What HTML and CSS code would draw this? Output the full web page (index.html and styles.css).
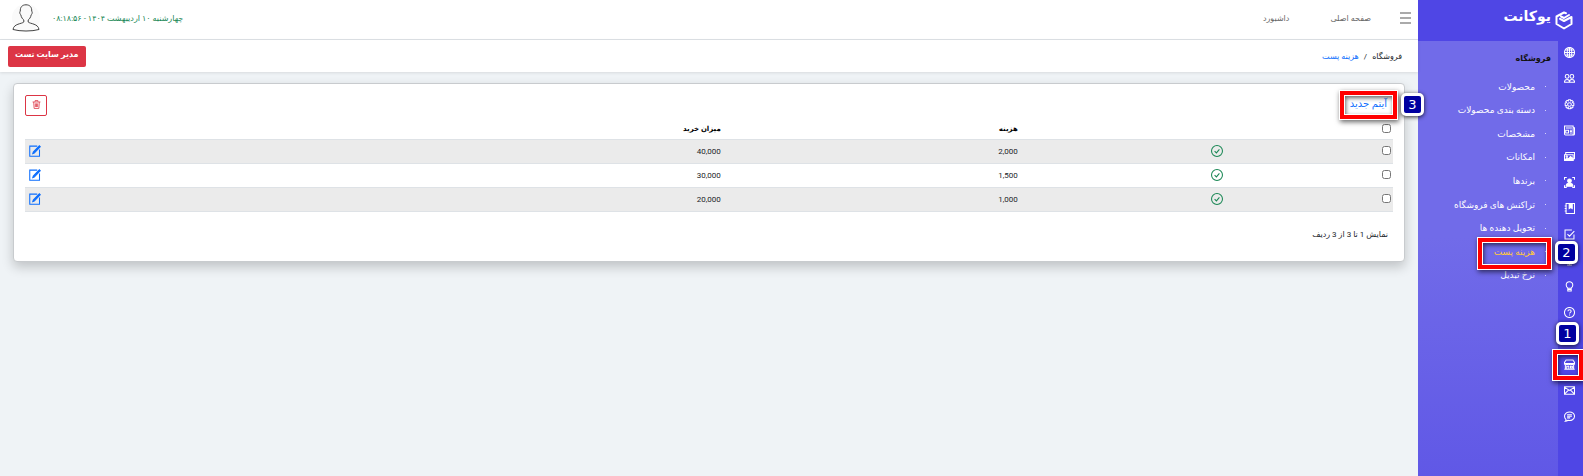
FILE: index.html
```html
<!DOCTYPE html>
<html lang="fa" dir="rtl">
<head>
  <meta charset="UTF-8" />
  <meta name="viewport" content="width=device-width, initial-scale=1.0"/>
  <title>هزینه پست</title>
  <link rel="stylesheet" href="styles.css">
</head>
<body>

<aside class="sidebar">
  <div class="brand">
    <svg class="brand-icon" viewBox="0 0 18 19" fill="none" stroke="#fff" stroke-width="2" stroke-linejoin="round" stroke-linecap="round">
      <path d="M11 2.200 9 1.500 1.500 5.500v7.500L9 17.500l7.500-4.500V6L9 10 5 7.800M6 5.500l3 1.500 5-3"/>
    </svg>
    <span class="brand-name">یوکانت</span>
  </div>
  <div class="sidebar-body">
    <nav class="rail">
      <a href="#" aria-label="سایت"><svg viewBox="0 0 16 16"><circle cx="8" cy="8" r="7.300"/><ellipse cx="8" cy="8" rx="3.300" ry="7.300"/><path d="M8 .7v14.600M.7 8h14.600M1.800 4.500h12.400M1.800 11.500h12.400"/></svg></a>
      <a href="#" aria-label="کاربران"><svg viewBox="0 0 16 16"><circle cx="4.500" cy="5" r="2.700"/><circle cx="11.500" cy="5" r="2.700"/><path d="M.6 13.500c0-2.500 1.500-4 3.900-4s3.500 1.500 3.500 4zM8 13.500c0-2.500 1.200-4 3.500-4s3.900 1.500 3.900 4z"/></svg></a>
      <a href="#" aria-label="تنظیمات"><svg viewBox="0 0 16 16"><circle cx="8" cy="8" r="2.700"/><path d="M6.700 1h2.600l.5 1.900 1.700-1 1.900 1.900-1 1.700 1.900.5v3.200l-1.900.5 1 1.700-1.900 1.900-1.700-1-.5 1.900H6.700l-.5-1.900-1.700 1-1.900-1.900 1-1.700-1.900-.5V6l1.900-.5-1-1.700 1.900-1.900 1.700 1z"/></svg></a>
      <a href="#" aria-label="اخبار"><svg viewBox="0 0 16 16"><path d="M.7 1.500h12.600v13H2.200A1.500 1.500 0 0 1 .7 13zM13.300 4h2v9a1.500 1.500 0 0 1-2 1.500M2.500 4.500h9M2.500 7.500h4v4h-4zM8.500 7.500h3M8.500 9.500h3M8.500 11.500h3"/></svg></a>
      <a href="#" aria-label="تصاویر"><svg viewBox="0 0 16 16"><path d="M.7 5.300h12.600v8.500H.7zM2.500 5V2.300h12.800v9h-2"/><circle cx="4" cy="8" r="1"/><path class="solid" d="m1 13 3.500-3 2 1.500L9.500 8l3.500 3v2.500H1z"/></svg></a>
      <a href="#" aria-label="اعضا"><svg viewBox="0 0 16 16"><path d="M.7 4V.7H4M12 .7h3.300V4M15.300 12v3.300H12M4 15.300H.7V12"/><circle class="solid" cx="8" cy="5.500" r="2.700"/><path class="solid" d="M3 13.500c0-3 1.800-4.300 5-4.300s5 1.300 5 4.300z"/></svg></a>
      <a href="#" aria-label="دفترچه"><svg viewBox="0 0 16 16"><path d="M3 .7h12.300v14.600H3zM1 4.500h3M1 8h3M1 11.500h3"/><path class="solid" d="M7.500 1h4.500v7l-2.200-1.500L7.500 8z"/></svg></a>
      <a href="#" aria-label="وظایف"><svg viewBox="0 0 16 16"><path d="M11.500 1.500H1.500v13h13V8M5 7.500l3 3 7-7.500"/></svg></a>
      <a href="#" aria-label="نمایش"><svg viewBox="0 0 16 16"><path d="M1 2h14v9H1zM8 11v3M4.500 14.500h7"/></svg></a>
      <a href="#" aria-label="ایده‌ها"><svg viewBox="0 0 16 16"><path d="M5.500 10.500c-1.200-1.200-2.300-2.500-2.300-4.700a4.800 4.800 0 0 1 9.600 0c0 2.200-1.100 3.500-2.300 4.700zM5.500 10.500v4h5v-4M5.500 12.500h5"/></svg></a>
      <a href="#" aria-label="راهنما"><svg viewBox="0 0 16 16"><circle cx="8" cy="8" r="7.300"/><path d="M5.700 6.200c0-3.200 4.700-3 4.700-.2 0 1.700-2.300 1.700-2.300 3.600M8.100 11v1.500"/></svg></a>
      <a href="#" aria-label="گزارش"><svg viewBox="0 0 16 16"><path d="M2 13V8M6 13V4M10 13V9M14 13V3"/></svg></a>
      <a href="#" class="marked mark-shop" aria-label="فروشگاه"><svg viewBox="0 0 16 16"><path d="M3 1.500h10l2.300 3.700v1.300H.7V5.200zM.7 6.500c0 2.500 3.700 2.500 3.700 0 0 2.500 3.600 2.500 3.600 0 0 2.500 3.600 2.500 3.600 0 0 2.500 3.700 2.500 3.700 0M2 8.500v6.500M14 8.500v6.500M.5 15h15M4 15v-4.500h3V15M9.500 10.500h2.700v2.500H9.500z"/></svg><span class="frame"></span><b class="step">1</b></a>
      <a href="#" aria-label="پیام‌ها"><svg viewBox="0 0 16 16"><path d="M.7 2.700h14.600v10.600H.7zM1 3.500l7 4.500 7-4.500M1 13l5.500-5.500M15 13 9.500 7.500"/></svg></a>
      <a href="#" aria-label="نظرات"><svg viewBox="0 0 16 16"><path d="M2 14.800c.8-.7 1-1.500 1-2.300C-1.500 8 1.500 1.300 8 1.300c4 0 7.300 2.800 7.300 6.200 0 4.700-4.800 7.200-9.300 6-1 .7-2.500 1.300-4 1.300zM4.500 5.500h7M4.500 7.700h7M4.500 10h4.500"/></svg></a>
    </nav>
    <nav class="menu">
      <h2>فروشگاه</h2>
      <ul>
        <li><a href="#">محصولات</a></li>
        <li><a href="#">دسته بندی محصولات</a></li>
        <li><a href="#">مشخصات</a></li>
        <li><a href="#">امکانات</a></li>
        <li><a href="#">برندها</a></li>
        <li><a href="#">تراکنش های فروشگاه</a></li>
        <li><a href="#">تحویل دهنده ها</a></li>
        <li class="marked mark-menu"><a href="#" class="active">هزینه پست</a><span class="frame"></span><b class="step">2</b></li>
        <li><a href="#">نرخ تبدیل</a></li>
      </ul>
    </nav>
  </div>
</aside>

<div class="page">
  <header class="topbar">
    <button class="toggle" aria-label="منو"><span></span><span></span><span></span></button>
    <nav class="top-links">
      <a href="#">صفحه اصلی</a>
      <a href="#">داشبورد</a>
    </nav>
    <time class="clock">چهارشنبه ۱۰ اردیبهشت ۱۴۰۴ - ۰۸:۱۸:۵۶</time>
    <svg class="avatar" viewBox="0 0 28 28" fill="none" stroke="#444" stroke-width="1">
      <circle cx="14" cy="14" r="14" fill="#fafafa" stroke="none"/>
      <path d="M14 .8c-4 0-6 2.600-5.700 6.500-.8 0-.7 2.700.5 3.500.5 2.700 2 4.500 3 5.200v2c-2 2-10 1.500-10.800 7.500 7 2 19 2 26 0-.8-6-8.800-5.500-10.800-7.500v-2c1-.7 2.500-2.500 3-5.200 1.200-.8 1.300-3.500.5-3.500C20 3.400 18 .8 14 .8z"/>
    </svg>
  </header>

  <div class="subbar">
    <nav class="breadcrumb">
      <span>فروشگاه</span>
      <span>/</span>
      <a href="#">هزینه پست</a>
    </nav>
    <button class="admin">مدیر سایت تست</button>
  </div>

  <main class="card">
    <div class="actions">
      <div class="marked mark-new"><a href="#">آیتم جدید</a><span class="frame"></span><b class="step">3</b></div>
      <button class="delete" aria-label="حذف">
        <svg viewBox="0 0 16 16" fill="none" stroke="currentColor" stroke-width="1.400"><path d="M1 3.500h14M5.500 3V1h5v2M3 3.500l.8 11.500h8.400L13 3.500M6 6v6.500M8 6v6.500M10 6v6.500"/></svg>
      </button>
    </div>

    <table class="list">
      <thead>
        <tr>
          <th class="col-check"><input type="checkbox" aria-label="انتخاب همه"></th>
          <th class="col-status"></th>
          <th class="col-cost">هزینه</th>
          <th>میزان خرید</th>
          <th class="col-edit"></th>
        </tr>
      </thead>
      <tbody>
        <tr>
          <td><input type="checkbox" aria-label="انتخاب ردیف 1"></td>
          <td><svg class="ok" viewBox="0 0 16 16"><circle cx="8" cy="8" r="7.300"/><path d="m4.800 8.200 2.400 2.400 4-4.800"/></svg></td>
          <td>2,000</td>
          <td>40,000</td>
          <td><a href="#" aria-label="ویرایش"><svg class="edit" viewBox="0 0 16 16"><path d="M11 1.500H1v13.500h13V6"/><path class="pen" d="M5 11.500l.7-2L13.800 1l1.200 1.200L7 10.800z"/></svg></a></td>
        </tr>
        <tr>
          <td><input type="checkbox" aria-label="انتخاب ردیف 2"></td>
          <td><svg class="ok" viewBox="0 0 16 16"><circle cx="8" cy="8" r="7.300"/><path d="m4.800 8.200 2.400 2.400 4-4.800"/></svg></td>
          <td>1,500</td>
          <td>30,000</td>
          <td><a href="#" aria-label="ویرایش"><svg class="edit" viewBox="0 0 16 16"><path d="M11 1.500H1v13.500h13V6"/><path class="pen" d="M5 11.500l.7-2L13.800 1l1.200 1.200L7 10.800z"/></svg></a></td>
        </tr>
        <tr>
          <td><input type="checkbox" aria-label="انتخاب ردیف 3"></td>
          <td><svg class="ok" viewBox="0 0 16 16"><circle cx="8" cy="8" r="7.300"/><path d="m4.800 8.200 2.400 2.400 4-4.800"/></svg></td>
          <td>1,000</td>
          <td>20,000</td>
          <td><a href="#" aria-label="ویرایش"><svg class="edit" viewBox="0 0 16 16"><path d="M11 1.500H1v13.500h13V6"/><path class="pen" d="M5 11.500l.7-2L13.800 1l1.200 1.200L7 10.800z"/></svg></a></td>
        </tr>
      </tbody>
    </table>

    <p class="summary">نمایش 1 تا 3 از 3 ردیف</p>
  </main>
</div>

</body>
</html>
```
FILE: styles.css
```css
* {
  box-sizing: border-box;
}

body {
  margin: 0;
  min-height: 100vh;
  display: flex;
  background: #eff3f6;
  color: #212529;
  font-family: Roboto, "DejaVu Sans", sans-serif;
  font-size: 8px;
}

a {
  color: #0d6efd;
  text-decoration: none;
}

button {
  font-family: inherit;
  cursor: pointer;
}

svg {
  display: block;
}

/* Sidebar */
.sidebar {
  width: 165px;
  flex-shrink: 0;
  display: flex;
  flex-direction: column;
  background: #4f46e5;
}

.brand {
  height: 41px;
  padding: 11px 10px 0;
  display: flex;
  gap: 4px;
}

.brand-icon {
  width: 18px;
  height: 19px;
}

.brand-name {
  color: #fff;
  font-size: 14px;
  font-weight: bold;
  line-height: 10px;
}

.sidebar-body {
  flex: 1;
  display: flex;
}

.rail {
  width: 25px;
  margin-top: -2px;
  display: flex;
  flex-direction: column;
}

.rail a {
  height: 26px;
  padding-right: 8px;
  display: flex;
  align-items: center;
  color: #fff;
}

.rail svg {
  width: 11px;
  height: 11px;
  fill: none;
  stroke: currentColor;
  stroke-width: 1.5;
}

.rail .solid {
  fill: currentColor;
}

.menu {
  flex: 1;
  padding: 9px 7px;
  background: linear-gradient(#716be9 45%, #6058e6);
}

.menu h2 {
  margin: 0 0 7px;
  color: #111;
  font-size: 8px;
  line-height: 18px;
}

.menu ul {
  height: 212px;
  margin: 0;
  padding: 0;
  display: grid;
  grid-auto-rows: 1fr;
  list-style: none;
}

.menu li {
  padding-right: 5px;
  display: flex;
  align-items: center;
  gap: 10px;
}

.menu li::before {
  content: "";
  width: 1px;
  height: 1px;
  background: #d5d2fa;
}

.menu a {
  color: #fff;
  font-size: 9px;
}

.menu .active {
  color: #ffc83d;
}

/* Numbered step markers */
.marked {
  position: relative;
}

.frame,
.step {
  position: absolute;
  z-index: 2;
  pointer-events: none;
}

.frame {
  border: 4px solid #f00;
  outline: 1px solid #fff;
  box-shadow: 1px 2px 5px 1px rgba(0, 0, 0, 0.6), inset 0 0 0 1px #fff, inset 1px 2px 4px 1px rgba(0, 0, 0, 0.6);
}

.step {
  width: 23px;
  height: 23px;
  border: 3px solid #fff;
  border-radius: 5px;
  background: #0000a0;
  box-shadow: 0 1px 4px rgba(0, 0, 0, 0.8);
  color: #fff;
  font: 13px/17px "DejaVu Sans", sans-serif;
  text-align: center;
}

.mark-shop .frame {
  inset: -1px 0 -3px -5px;
}

.mark-shop .step {
  top: -29px;
  left: -2px;
}

.mark-menu .frame {
  inset: -2px 0 -6px 53px;
}

.mark-menu .step {
  top: 1px;
  right: -27px;
}

.mark-new .frame {
  inset: -4px -10px -4px -10px;
}

.mark-new .step {
  top: -2px;
  right: -37px;
}

/* Page */
.page {
  flex: 1;
  min-width: 0;
}

.topbar {
  height: 40px;
  padding: 0 7px 3px 12px;
  display: flex;
  align-items: center;
  border-bottom: 1px solid #dee2e6;
  background: #fff;
}

.toggle {
  padding: 0;
  display: grid;
  gap: 3px;
  border: 0;
  background: none;
}

.toggle span {
  width: 11px;
  height: 2px;
  background: #aaa;
}

.top-links {
  margin-right: 29px;
  display: flex;
  gap: 41px;
}

.top-links a {
  color: #666;
}

.clock {
  margin-right: auto;
  color: #198754;
}

.avatar {
  width: 28px;
  height: 28px;
  margin-right: 12px;
}

.subbar {
  height: 32px;
  padding: 0 16px 0 8px;
  display: flex;
  align-items: center;
  justify-content: space-between;
  background: #fff;
  box-shadow: 0 1px 3px rgba(0, 0, 0, 0.1);
}

.breadcrumb {
  display: flex;
  gap: 5px;
}

.admin {
  height: 21px;
  padding: 0 7px 3px;
  border: 0;
  border-radius: 2px;
  background: #dc3545;
  color: #fff;
  font-size: 8px;
  font-weight: bold;
}

.card {
  margin: 11px 13px;
  padding: 11px;
  border: 1px solid #c8cbce;
  border-radius: 4px;
  background: #fff;
  box-shadow: 0 5px 12px rgba(0, 0, 0, 0.2);
}

.actions {
  display: flex;
  justify-content: space-between;
}

.mark-new {
  height: 20px;
  margin-right: 6px;
  font-size: 10px;
  line-height: 18px;
}

.delete {
  width: 22px;
  height: 21px;
  padding: 0 0 3px;
  display: grid;
  place-items: center;
  border: 1px solid #dc3545;
  border-radius: 2px;
  background: #fff;
  color: #dc3545;
}

.delete svg {
  width: 9px;
  height: 9px;
}

.list {
  width: 100%;
  margin-top: 4px;
  border-collapse: collapse;
  table-layout: fixed;
}

.list th,
.list td {
  height: 24px;
  padding: 0 2px;
  border-bottom: 1px solid #dee2e6;
  text-align: right;
  vertical-align: middle;
}

.list th {
  height: 19px;
  color: #000;
  font-size: 7px;
}

.list tbody tr:nth-child(odd) {
  background: #ebebeb;
}

.list input {
  width: 9px;
  height: 9px;
  margin: 0 0 2px;
  display: block;
}

.col-check {
  width: 168px;
}

.col-status {
  width: 15%;
}

.col-cost {
  width: 297px;
}

.col-edit {
  width: 18px;
}

.ok,
.edit {
  width: 12px;
  height: 12px;
  margin-bottom: 1px;
  fill: none;
  stroke: #198754;
  stroke-width: 1.4;
}

.edit {
  stroke: #0d6efd;
}

.edit .pen {
  fill: #0d6efd;
}

.summary {
  margin: 18px 5px 10px;
  line-height: 10px;
}
```
